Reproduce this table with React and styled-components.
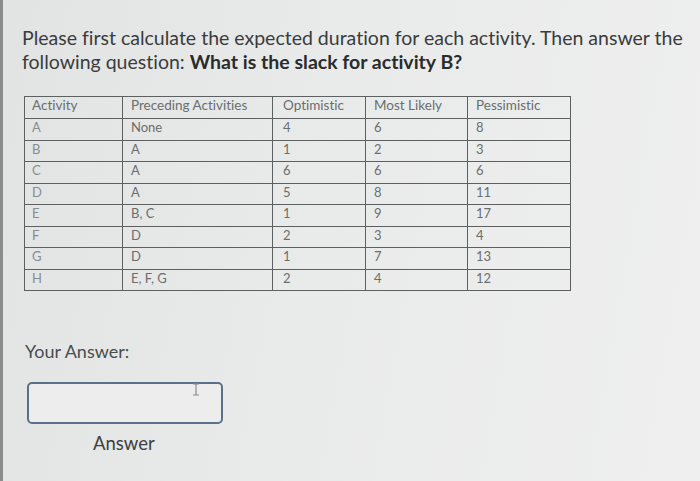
import React from 'react';
import styled, { createGlobalStyle } from 'styled-components';

const Global = createGlobalStyle`
    html, body {
        margin: 0;
        padding: 0;
        background: #e8eae9;
    }
`

const Page = styled.div`
    width: 700px;
    height: 481px;
    box-sizing: border-box;
    border-left: 3px solid #8a8c8c;
    background: linear-gradient(100deg, #e2e4e4 0%, #e9ebea 45%, #eeefee 100%);
    padding: 26px 0 0 19px;
    font-family: Lato, 'Open Sans', sans-serif;
    font-variant-ligatures: none;
    overflow: hidden;
`

const Question = styled.p`
    margin: 0;
    font-size: 19.5px;
    line-height: 24px;
    color: #3a3c3c;
    width: 675px;
    strong {
        color: #2a2c2c;
        font-weight: 700;
    }
`

const Table = styled.table`
    margin-top: 22px;
    margin-left: 2px;
    border-collapse: collapse;
    table-layout: fixed;
    font-family: Lato, 'Open Sans', sans-serif;
    color: #707474;
`

const Row = styled.tr`
    height: ${p => p.$head ? 22 : 21.5}px;
`

const Cell = styled.td`
    box-sizing: border-box;
    border: 1.5px solid #5d6060;
    width: ${p => p.$w}px;
    padding: 0 0 0 ${p => p.$pad}px;
    vertical-align: top;
    line-height: 17px;
    color: ${p => p.$light ? '#888c8c' : '#6a6e6e'};
    font-size: ${p => p.$head ? 13.5 : 13}px;
`

const AnswerLabel = styled.div`
    margin-top: 49px;
    margin-left: 3px;
    font-size: 18px;
    line-height: 22px;
    color: #4a4c4c;
`

const InputBox = styled.div`
    position: relative;
    margin-top: 20px;
    margin-left: 5px;
    width: 192px;
    height: 38px;
    border: 2px solid #5a7088;
    border-radius: 5px;
    background: #ecedec;
`

const Caret = styled.svg`
    position: absolute;
    left: 163px;
    top: -1px;
`

const AnswerCaption = styled.div`
    margin-top: 8px;
    margin-left: 71px;
    font-size: 18.5px;
    line-height: 22px;
    color: #3e4040;
`

const widths = [98, 150, 93, 102, 103];
const pads = [7, 8, 10, 8, 8];
const heads = ['Activity', 'Preceding Activities', 'Optimistic', 'Most Likely', 'Pessimistic'];
const rows = [
    ['A', 'None', '4', '6', '8'],
    ['B', 'A', '1', '2', '3'],
    ['C', 'A', '6', '6', '6'],
    ['D', 'A', '5', '8', '11'],
    ['E', 'B, C', '1', '9', '17'],
    ['F', 'D', '2', '3', '4'],
    ['G', 'D', '1', '7', '13'],
    ['H', 'E, F, G', '2', '4', '12'],
];

export default function App() {
    return (
        <Page>
            <Global />
            <Question>
                Please first calculate the expected duration for each activity. Then answer the following question: <strong>What is the slack for activity B?</strong>
            </Question>
            <Table>
                <tbody>
                    <Row $head>
                        {heads.map((h, i) => (
                            <Cell key={h} $head $w={widths[i]} $pad={pads[i]}>{h}</Cell>
                        ))}
                    </Row>
                    {rows.map(r => (
                        <Row key={r[0]}>
                            {r.map((c, i) => (
                                <Cell key={i} $w={widths[i]} $pad={pads[i]} $light={i === 0}>{c}</Cell>
                            ))}
                        </Row>
                    ))}
                </tbody>
            </Table>
            <AnswerLabel>Your Answer:</AnswerLabel>
            <InputBox>
                <Caret width="8" height="13" viewBox="0 0 8 13">
                    <path d="M1 1h6M4 1v11M1 12h6" stroke="#8a8c8c" strokeWidth="1.2" fill="none" />
                </Caret>
            </InputBox>
            <AnswerCaption>Answer</AnswerCaption>
        </Page>
    );
}
